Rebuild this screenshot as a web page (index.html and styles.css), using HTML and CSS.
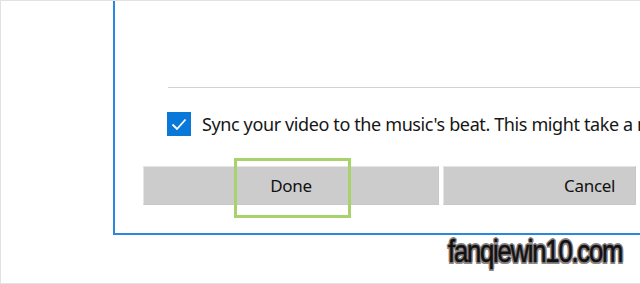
FILE: index.html
```html
<!DOCTYPE html>
<html>
<head>
<meta charset="utf-8">
<link rel="stylesheet" href="styles.css">
</head>
<body>
<div class="frame">
  <div class="dialog">
    <div class="divider"></div>
    <div class="check-row">
      <span class="checkbox">
        <svg width="24" height="24" viewBox="0 0 24 24"><polyline points="5.5,12.5 10,17 18.5,7.5" fill="none" stroke="#fff" stroke-width="1.8"/></svg>
      </span>
      <span class="label">Sync your video to the music's beat. This might take a minute.</span>
    </div>
    <div class="buttons">
      <div class="btn done">Done</div>
      <div class="btn cancel">Cancel</div>
    </div>
  </div>
  <div class="highlight"></div>
  <div class="watermark">fanqiewin10.com</div>
</div>
</body>
</html>
```
FILE: styles.css
```css
html, body {
  margin: 0;
  padding: 0;
  background: #fff;
}
.frame {
  position: relative;
  width: 639px;
  height: 282px;
  border-top: 1px solid #e2e2e2;
  border-left: 1px solid #e2e2e2;
  border-bottom: 1px solid #e2e2e2;
  overflow: hidden;
  font-family: "Noto Sans", "Open Sans", sans-serif;
  color: #1b1b1b;
}
.dialog {
  margin-left: 112px;
  width: 700px;
  border-left: 2px solid #2a87e2;
  border-bottom: 2px solid #2a87e2;
  padding-top: 87px;
  box-sizing: border-box;
  height: 235px;
  margin-top: -1px;
}
.divider {
  margin-left: 53px;
  height: 1px;
  background: #d2d2d2;
}
.check-row {
  display: flex;
  align-items: center;
  margin-top: 24px;
  margin-left: 52px;
  height: 24px;
  white-space: nowrap;
}
.checkbox {
  width: 24px;
  height: 24px;
  background: #0a78d8;
  flex: none;
  display: block;
}
.checkbox svg { display: block; }
.label {
  margin-left: 11px;
  font-size: 18px;
  letter-spacing: -0.38px;
  color: #161616;
}
.buttons {
  display: flex;
  gap: 4px;
  margin-top: 30px;
  margin-left: 28px;
}
.btn {
  height: 39px;
  box-sizing: border-box;
  background: #cccccc;
  border: 1px solid #e4e4e4;
  border-right-color: #c8c8c8;
  border-bottom-color: #c8c8c8;
  display: flex;
  align-items: center;
  justify-content: center;
  font-size: 17px;
  letter-spacing: -0.3px;
  color: #111;
}
.done { width: 296px; }
.cancel {
  width: 193px;
  justify-content: flex-start;
  padding-left: 120px;
}
.highlight {
  position: absolute;
  left: 233px;
  top: 157px;
  width: 117px;
  height: 60px;
  box-sizing: border-box;
  border: 3px solid #a8d26c;
}
.watermark {
  position: absolute;
  left: 447px;
  top: 232px;
  font-family: "Liberation Sans", sans-serif;
  font-size: 32px;
  color: #111;
  letter-spacing: -1.5px;
  -webkit-text-stroke: 0.6px #111;
  transform: scaleX(0.8);
  transform-origin: left top;
  text-shadow:
    -2px 0 0 #8d8686, 2px 0 0 #8d8686, 0 -2px 0 #8d8686, 0 2px 0 #8d8686,
    -1.5px -1.5px 0 #8d8686, 1.5px -1.5px 0 #8d8686, -1.5px 1.5px 0 #8d8686, 1.5px 1.5px 0 #8d8686;
}
```
